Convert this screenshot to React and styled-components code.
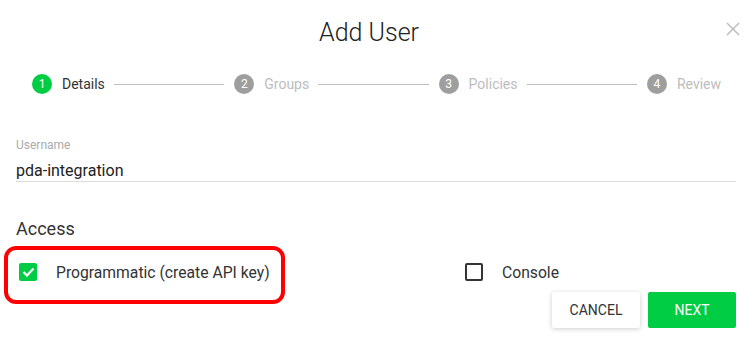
import styled, { createGlobalStyle } from "styled-components";

const GlobalStyle = createGlobalStyle`
  body {
    margin: 0;
    background: #fff;
    font-family: Roboto, "Liberation Sans", sans-serif;
    color: #333;
  }
`;

const Dialog = styled.div`
  width: 755px;
  height: 346px;
  box-sizing: border-box;
  padding: 0 19px 0 16px;
  overflow: hidden;
`;

const Header = styled.div`
  position: relative;
  padding: 18px 17px 0 0;
  margin: 0 -19px 0 -16px;
  text-align: center;
`;

const Title = styled.h1`
  margin: 0;
  font-size: 25px;
  font-weight: 300;
  line-height: 30px;
  color: #222;
`;

const Close = styled.button`
  position: absolute;
  top: 21px;
  right: 14px;
  width: 16px;
  height: 16px;
  padding: 0;
  border: none;
  background: none;
  display: flex;
  align-items: center;
  justify-content: center;
`;

const Stepper = styled.div`
  display: flex;
  align-items: center;
  height: 24px;
  margin-top: 24px;
  padding: 0 15px 0 16px;
`;

const Step = styled.div`
  display: flex;
  align-items: center;
  gap: 10px;
  font-size: 14px;
  color: ${(p) => (p.$active ? "#333" : "#bdbdbd")};
`;

const StepIcon = styled.span`
  width: 20px;
  height: 20px;
  border-radius: 50%;
  background: ${(p) => (p.$active ? "#00cc44" : "#9e9e9e")};
  color: #fff;
  font-size: 12px;
  display: flex;
  align-items: center;
  justify-content: center;
`;

const Connector = styled.div`
  flex: 1;
  height: 1px;
  background: #bdbdbd;
  margin: 0 10px 0 9px;
`;

const Field = styled.div`
  margin-top: 42px;
`;

const Label = styled.label`
  display: block;
  font-size: 12px;
  line-height: 14px;
  color: #aaa;
`;

const Input = styled.div`
  margin-top: 9px;
  height: 20px;
  font-size: 16px;
  line-height: 20px;
  color: #222;
  border-bottom: 1px solid #ddd;
`;

const Section = styled.h2`
  margin: 36px 0 0;
  font-size: 18px;
  font-weight: 400;
  line-height: 22px;
  color: #333;
`;

const Options = styled.div`
  display: grid;
  grid-template-columns: 446px 1fr;
  margin-top: 20px;
`;

const Option = styled.div`
  position: relative;
  display: flex;
  align-items: center;
  gap: 16px;
  height: 24px;
  font-size: 15.7px;
  color: #333;

  ${(p) =>
    p.$marked &&
    `
    &::after {
      content: "";
      position: absolute;
      left: -12px;
      top: -14px;
      width: 281px;
      height: 58px;
      box-sizing: border-box;
      border: 4px solid #f00;
      border-radius: 12px;
    }
  `}
`;

const Box = styled.span`
  width: 18px;
  height: 18px;
  margin: 3px;
  box-sizing: border-box;
  border-radius: 2px;
  border: ${(p) => (p.$checked ? "none" : "2px solid #333")};
  background: ${(p) => (p.$checked ? "#00cc44" : "transparent")};
  display: flex;
  align-items: center;
  justify-content: center;
`;

const Actions = styled.div`
  display: flex;
  justify-content: flex-end;
  gap: 8px;
  margin-top: 8px;
`;

const Button = styled.button`
  width: 88px;
  height: 36px;
  border: none;
  border-radius: 2px;
  font-family: Roboto, "Liberation Sans", sans-serif;
  font-size: 14px;
  text-transform: uppercase;
  background: ${(p) => (p.$primary ? "#00cc44" : "#fff")};
  color: ${(p) => (p.$primary ? "#fff" : "#333")};
  box-shadow: ${(p) =>
    p.$primary ? "none" : "0 1px 5px rgba(0, 0, 0, 0.2)"};
`;

const steps = ["Details", "Groups", "Policies", "Review"];

function Check({ checked }) {
  return (
    <Box $checked={checked}>
      {checked && (
        <svg width="13" height="10" viewBox="0 0 13 10">
          <path
            d="M1.5 5l3.5 3.5 6.5-7"
            fill="none"
            stroke="#fff"
            strokeWidth="2.2"
          />
        </svg>
      )}
    </Box>
  );
}

export default function App() {
  return (
    <>
      <GlobalStyle />
      <Dialog>
        <Header>
          <Title>Add User</Title>
          <Close>
            <svg width="14" height="14" viewBox="0 0 14 14">
              <path
                d="M1 1l12 12M13 1L1 13"
                stroke="#bdbdbd"
                strokeWidth="1.5"
              />
            </svg>
          </Close>
        </Header>

        <Stepper>
          {steps.map((s, i) => (
            <>
              {i > 0 && <Connector key={"c" + i} />}
              <Step key={s} $active={i === 0}>
                <StepIcon $active={i === 0}>{i + 1}</StepIcon>
                {s}
              </Step>
            </>
          ))}
        </Stepper>

        <Field>
          <Label>Username</Label>
          <Input>pda-integration</Input>
        </Field>

        <Section>Access</Section>
        <Options>
          <Option $marked>
            <Check checked />
            Programmatic (create API key)
          </Option>
          <Option>
            <Check />
            Console
          </Option>
        </Options>

        <Actions>
          <Button>Cancel</Button>
          <Button $primary>Next</Button>
        </Actions>
      </Dialog>
    </>
  );
}
